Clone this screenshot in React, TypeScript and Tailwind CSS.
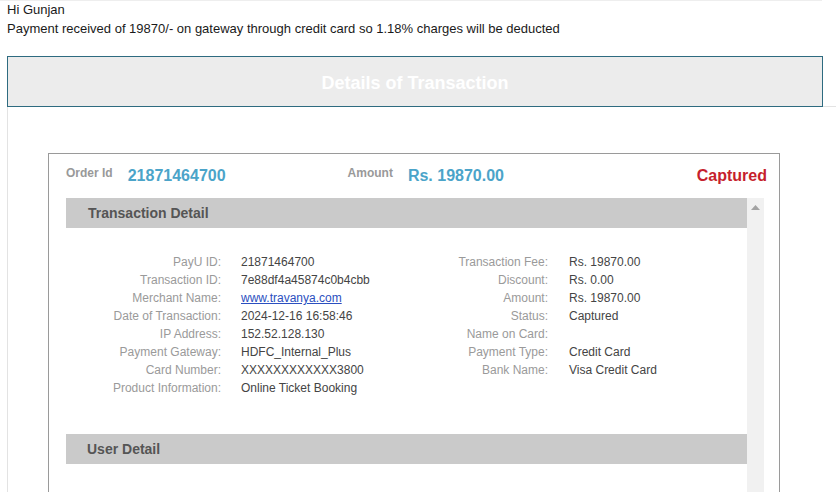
import React from "react";

const left: [string, React.ReactNode][] = [
  ["PayU ID:", "21871464700"],
  ["Transaction ID:", "7e88df4a45874c0b4cbb"],
  ["Merchant Name:", <a className="text-[#2b4fc0] underline">www.travanya.com</a>],
  ["Date of Transaction:", "2024-12-16 16:58:46"],
  ["IP Address:", "152.52.128.130"],
  ["Payment Gateway:", "HDFC_Internal_Plus"],
  ["Card Number:", "XXXXXXXXXXXX3800"],
  ["Product Information:", "Online Ticket Booking"],
];

const right: [string, string][] = [
  ["Transaction Fee:", "Rs. 19870.00"],
  ["Discount:", "Rs. 0.00"],
  ["Amount:", "Rs. 19870.00"],
  ["Status:", "Captured"],
  ["Name on Card:", ""],
  ["Payment Type:", "Credit Card"],
  ["Bank Name:", "Visa Credit Card"],
  ["", ""],
];

export default function App() {
  return (
    <div
      className="w-[836px] h-[492px] overflow-hidden bg-white text-[#222]"
      style={{ fontFamily: '"Liberation Sans", Arial, sans-serif' }}
    >
      <div className="w-[822px] border-t border-[#eeeeee] pl-[7px] text-[13px] leading-[19px] text-[#1a1a1a]">
        <div className="-mt-[1px]">Hi Gunjan</div>
        <div>Payment received of 19870/- on gateway through credit card so 1.18% charges will be deducted</div>
      </div>
      <div className="pl-[7px] mt-[18px]">
        <div className="relative z-10 w-[816px] h-[51px] border border-[#2e6b80] bg-[#ececec] flex items-center justify-center pt-[3px] text-white font-bold text-[18px]">
          Details of Transaction
        </div>
        <div className="-mt-[1px] border-l border-t border-[#e3e3e3] h-[400px] pl-[40px] pt-[46px]">
          <div className="w-[732px] h-[400px] border border-[#9a9a9a]">
            <div className="flex items-start h-[44px] pt-[11px] pl-[17px] pr-[12px]">
              <span className="text-[12px] font-bold text-[#999999] leading-[14px] mt-[1px]">Order Id</span>
              <span className="ml-[15px] text-[16px] font-bold text-[#4ba4c9] leading-[18px] mt-[2px]">21871464700</span>
              <span className="ml-[122px] text-[12px] font-bold text-[#999999] leading-[14px] mt-[1px]">Amount</span>
              <span className="ml-[15px] text-[16px] font-bold text-[#4ba4c9] leading-[18px] mt-[2px]">Rs. 19870.00</span>
              <span className="ml-auto text-[16px] font-bold text-[#c61f2d] leading-[18px] mt-[2px]">Captured</span>
            </div>
            <div className="ml-[17px] w-[698px] flex">
              <div className="w-[681px]">
                <div className="h-[30px] bg-[#cacaca] flex items-center pl-[22px] text-[14px] font-bold text-[#555555]">
                  Transaction Detail
                </div>
                <div className="pt-[25px] pb-[37px] grid grid-cols-[175px_187px_141px_1fr] text-[12px] leading-[18px]">
                  {left.map((l, i) => (
                    <React.Fragment key={i}>
                      <div className="text-right pr-[20px] text-[#9a9a9a] whitespace-nowrap">{l[0]}</div>
                      <div className="text-[#444444] whitespace-nowrap">{l[1]}</div>
                      <div className="text-right pr-[21px] text-[#9a9a9a] whitespace-nowrap">{right[i][0]}</div>
                      <div className="text-[#444444] whitespace-nowrap">{right[i][1]}</div>
                    </React.Fragment>
                  ))}
                </div>
                <div className="h-[30px] bg-[#cacaca] flex items-center pl-[21px] text-[14px] font-bold text-[#555555]">
                  User Detail
                </div>
              </div>
              <div className="w-[17px] h-[300px] bg-[#f1f1f1] flex justify-center pt-[7px]">
                <svg width="9" height="5" viewBox="0 0 9 5">
                  <polygon points="4.5,0 9,5 0,5" fill="#a3a3a3" />
                </svg>
              </div>
            </div>
          </div>
        </div>
      </div>
    </div>
  );
}
